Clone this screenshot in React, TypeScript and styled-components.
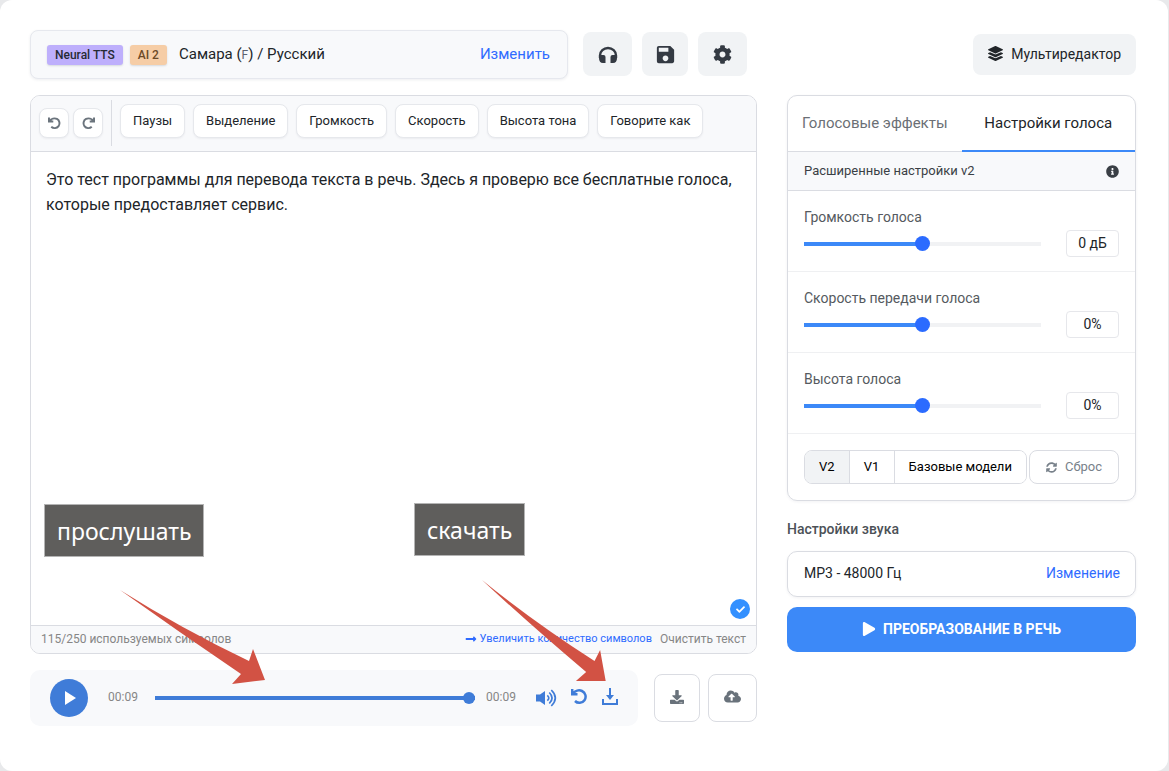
import React, { useState } from 'react';
import styled, { createGlobalStyle, css } from 'styled-components';
import { MdSave } from 'react-icons/md';
import { FaCog, FaLayerGroup, FaInfoCircle, FaPlay, FaSyncAlt, FaCloudUploadAlt, FaDownload, FaCheck, FaLongArrowAltRight } from 'react-icons/fa';

const blue = '#3c89f8';
const playerBlue = '#3f7cd8';
const line = '#dadce2';
const pale = '#f8f9fb';

const GlobalStyle = createGlobalStyle`
  *, *::before, *::after { box-sizing: border-box; }
  body {
    margin: 0;
    background: #e8e9eb;
    color: #212529;
    font: 14px/20px Roboto, "Liberation Sans", sans-serif;
  }
  button, input, textarea { font: inherit; color: inherit; margin: 0; }
  button { cursor: pointer; padding: 0; border: 0; background: none; }
  a { color: #2f6bff; text-decoration: none; }
  svg { display: block; flex: none; }
`;

const Page = styled.main`
  position: relative;
  min-height: 100vh;
  margin-right: 1px;
  padding: 30px 32px 44px 30px;
  background: #fff;
  border-radius: 12px;
`;

const Header = styled.header`
  display: flex;
  align-items: center;
  margin-bottom: 16px;
`;

const VoiceBar = styled.div`
  flex: 0 1 538px;
  display: flex;
  align-items: center;
  height: 49px;
  padding: 0 17px 0 16px;
  font-size: 15px;
  background: ${pale};
  border: 1px solid #e6e8ee;
  border-radius: 8px;
  box-shadow: 0 1px 3px rgba(30, 40, 60, 0.08);
  a { margin-left: auto; padding-bottom: 2px; }
  small { font-size: 12px; color: #5c6370; }
`;

const Tag = styled.span<{ $bg: string; $fg: string }>`
  padding: 0 8px;
  margin-right: 7px;
  font-size: 12px;
  font-weight: 500;
  border-radius: 3px;
  color: ${p => p.$fg};
  background: ${p => p.$bg};
  box-shadow: 0 1px 2px rgba(30, 40, 60, 0.15);
`;

const VoiceName = styled.span`
  margin-left: 5px;
`;

const HeaderTools = styled.div`
  display: flex;
  gap: 10px;
  margin-left: 15px;
  padding-bottom: 1px;
`;

const HeaderButton = styled.button<{ $narrow?: boolean }>`
  display: flex;
  align-items: center;
  justify-content: center;
  width: ${p => (p.$narrow ? 46 : 49)}px;
  height: 44px;
  border-radius: 8px;
  background: #f1f3f5;
  color: #343a43;
`;

const MultiButton = styled.button`
  display: flex;
  align-items: center;
  gap: 8px;
  height: 41px;
  margin-left: auto;
  padding: 0 15px 2px;
  border-radius: 8px;
  background: #f1f3f5;
`;

const Columns = styled.div`
  display: grid;
  grid-template-columns: minmax(0, 727fr) minmax(0, 349fr);
  column-gap: 30px;
`;

const Editor = styled.section`
  position: relative;
  display: flex;
  flex-direction: column;
  height: 559px;
  border: 1px solid ${line};
  border-radius: 10px;
`;

const Toolbar = styled.div`
  display: flex;
  gap: 8px;
  height: 56px;
  padding: 4px 8px;
  background: ${pale};
  border-bottom: 1px solid ${line};
  border-radius: 9px 9px 0 0;
`;

const History = styled.div`
  display: flex;
  align-items: center;
  gap: 4px;
  height: 46px;
  padding-right: 8px;
  border-right: 1px solid ${line};
`;

const softButton = css`
  display: flex;
  align-items: center;
  justify-content: center;
  background: #fff;
  border: 1px solid #e6e8ec;
  border-radius: 8px;
  box-shadow: 0 1px 2px rgba(30, 40, 60, 0.06);
`;

const HistoryButton = styled.button`
  ${softButton}
  width: 30px;
  height: 30px;
  color: #6b747d;
`;

const EffectButton = styled.button`
  ${softButton}
  height: 34px;
  margin-top: 4px;
  padding: 0 12px;
  font-size: 13px;
  white-space: nowrap;
`;

const TextArea = styled.textarea`
  flex: 1;
  width: 100%;
  padding: 15px;
  border: 0;
  outline: 0;
  resize: none;
  background: transparent;
  font-size: 16px;
  line-height: 25px;
`;

const StatusBar = styled.footer`
  display: flex;
  align-items: center;
  gap: 8px;
  height: 28px;
  padding: 0 10px 2px;
  font-size: 12px;
  color: #868686;
  background: ${pale};
  border-top: 1px solid ${line};
  border-radius: 0 0 9px 9px;
`;

const MoreLink = styled.a`
  display: flex;
  align-items: center;
  gap: 2px;
  margin-left: auto;
  font-size: 11px;
`;

const Badge = styled.span`
  position: absolute;
  right: 6px;
  bottom: 34px;
  display: grid;
  place-items: center;
  width: 20px;
  height: 20px;
  border-radius: 50%;
  background: #3390ff;
  color: #fff;
`;

const PlayerRow = styled.div`
  display: flex;
  align-items: center;
  margin-top: 16px;
`;

const Player = styled.div`
  flex: 1;
  display: flex;
  align-items: center;
  height: 56px;
  margin-right: 16px;
  padding: 0 20px;
  background: ${pale};
  border-radius: 10px;
`;

const Time = styled.span`
  padding-bottom: 2px;
  font-size: 12px;
  color: #868686;
`;

const PlayButton = styled.button`
  display: grid;
  place-items: center;
  width: 38px;
  height: 38px;
  margin-right: 20px;
  padding-left: 2px;
  border-radius: 50%;
  background: ${playerBlue};
  color: #fff;
`;

const PlayerTools = styled.div`
  display: flex;
  gap: 14px;
  margin-left: 20px;
  button { color: ${playerBlue}; }
`;

const FileButton = styled.button`
  display: grid;
  place-items: center;
  width: 46px;
  height: 48px;
  padding-bottom: 3px;
  border: 1px solid ${line};
  border-radius: 8px;
  background: #fff;
  color: #69727b;
  & + & { width: 49px; margin-left: 8px; }
`;

const Range = styled.input<{ $rest: string; $fill: string; $thumb: string; $size: number }>`
  appearance: none;
  flex: 1;
  min-width: 0;
  height: 16px;
  background: linear-gradient(${p => p.$fill}, ${p => p.$fill}) left center / var(--filled) 4px no-repeat,
    linear-gradient(${p => p.$rest}, ${p => p.$rest}) center / 100% 4px no-repeat;
  &::-webkit-slider-thumb {
    appearance: none;
    width: ${p => p.$size}px;
    height: ${p => p.$size}px;
    border-radius: 50%;
    background: ${p => p.$thumb};
  }
`;

const TrackRange = styled(Range)`
  margin: 0 11px 0 17px;
`;

const Panel = styled.section`
  border: 1px solid ${line};
  border-radius: 10px;
  box-shadow: 0 1px 3px rgba(30, 40, 60, 0.06);
`;

const Tabs = styled.div`
  display: flex;
  height: 56px;
  border-bottom: 1px solid ${line};
`;

const Tab = styled.button<{ $active?: boolean }>`
  flex: 1 1 50%;
  height: 56px;
  font-size: 15px;
  white-space: nowrap;
  color: ${p => (p.$active ? '#212529' : '#6b6f75')};
  border-bottom: 2px solid ${p => (p.$active ? blue : 'transparent')};
`;

const Notice = styled.div`
  display: flex;
  align-items: center;
  justify-content: space-between;
  height: 39px;
  padding: 0 16px;
  font-size: 13px;
  color: #3a3f45;
  background: ${pale};
  border-bottom: 1px solid ${line};
`;

const Setting = styled.div`
  height: 81px;
  padding: 16px 16px 0;
  border-bottom: 1px solid #eff0f2;
  label { display: block; color: #555a60; }
`;

const SettingRow = styled.div`
  display: flex;
  align-items: center;
  gap: 25px;
  margin-top: 3px;
`;

const Value = styled.output`
  width: 53px;
  height: 27px;
  line-height: 24px;
  text-align: center;
  border: 1px solid #e6e7eb;
  border-radius: 4px;
`;

const Versions = styled.div`
  display: flex;
  gap: 2px;
  padding: 16px;
  font-size: 13px;
`;

const Segments = styled.div`
  flex: 1;
  display: flex;
  height: 34px;
  border: 1px solid ${line};
  border-radius: 8px;
  overflow: hidden;
`;

const Segment = styled.button<{ $active?: boolean }>`
  flex: 1 1 auto;
  white-space: nowrap;
  color: #000;
  background: ${p => (p.$active ? '#f1f3f5' : '#fff')};
  & + & { border-left: 1px solid ${line}; }
`;

const ResetButton = styled.button`
  display: flex;
  align-items: center;
  justify-content: center;
  gap: 8px;
  width: 90px;
  height: 34px;
  color: #78818a;
  border: 1px solid ${line};
  border-radius: 8px;
`;

const Subtitle = styled.h2`
  margin: 18px 0 12px;
  font-size: 14px;
  line-height: 20px;
  font-weight: 500;
  color: #4c5157;
`;

const Format = styled(Panel)`
  display: flex;
  align-items: center;
  justify-content: space-between;
  height: 46px;
  padding: 0 15px 2px 16px;
`;

const ConvertButton = styled.button`
  display: flex;
  align-items: center;
  justify-content: center;
  gap: 7px;
  width: 100%;
  height: 45px;
  margin-top: 10px;
  padding-bottom: 2px;
  font-weight: 700;
  color: #fff;
  background: ${blue};
  border-radius: 10px;
`;

const Callout = styled.div<{ $left: number; $top: number }>`
  position: absolute;
  left: ${p => p.$left}px;
  top: ${p => p.$top}px;
  padding: 10px 12px 9px;
  font: 23px/32px "Noto Sans", sans-serif;
  color: #fff;
  background: #5f5e5c;
  border: 1px solid #b4b4b4;
`;

const Pointer = styled.svg<{ $left: number; $top: number }>`
  position: absolute;
  left: ${p => p.$left}px;
  top: ${p => p.$top}px;
  pointer-events: none;
`;

const effects = ['Паузы', 'Выделение', 'Громкость', 'Скорость', 'Высота тона', 'Говорите как'];
const settings = [
  { id: 'volume', label: 'Громкость голоса', unit: ' дБ' },
  { id: 'rate', label: 'Скорость передачи голоса', unit: '%' },
  { id: 'pitch', label: 'Высота голоса', unit: '%' },
];

function HeadphonesIcon() {
  return (
    <svg width="20" height="17" viewBox="0 0 20 17" fill="currentColor">
      <path d="M2 12v-2.500a8 7.500 0 0 1 16 0V12" fill="none" stroke="currentColor" strokeWidth="2.400" />
      <path d="M1 9h4.500Q7.500 9 7.500 11v6H5Q1 17 1 12zM19 9h-4.500q-2 0-2 2v6H15q4 0 4-5z" />
    </svg>
  );
}

function TurnIcon({ size, weight, forward }: { size: number; weight: number; forward?: boolean }) {
  return (
    <svg width={size} height={size} viewBox="0 0 16 16" fill="none" stroke="currentColor" strokeWidth={weight}>
      <g transform={forward ? 'matrix(-1 0 0 1 16 0)' : undefined}>
        <path d="M1.200 0.500v5h5.300M2 5.200C4 2 8 1 11 2.400a6 6 0 1 1-7 9.600" />
      </g>
    </svg>
  );
}

function VoiceSetting({ id, label, unit }: { id: string; label: string; unit: string }) {
  const [value, setValue] = useState(0);
  return (
    <Setting>
      <label htmlFor={id}>{label}</label>
      <SettingRow>
        <Range
          id={id}
          type="range"
          min={-50}
          max={50}
          value={value}
          onChange={e => setValue(Number(e.target.value))}
          $fill={blue}
          $rest="#f1f2f4"
          $thumb="#2b6bff"
          $size={15}
          style={{ '--filled': `${value + 50}%` } as React.CSSProperties}
        />
        <Value htmlFor={id}>{value}{unit}</Value>
      </SettingRow>
    </Setting>
  );
}

export default function App() {
  const [text, setText] = useState(
    'Это тест программы для перевода текста в речь. Здесь я проверю все бесплатные голоса, которые предоставляет сервис.',
  );
  const [position, setPosition] = useState(100);
  return (
    <>
      <GlobalStyle />
      <Page>
        <Header>
          <VoiceBar>
            <Tag $bg="#beaffc" $fg="#262a33">Neural TTS</Tag>
            <Tag $bg="#f6cda6" $fg="#6d4a27">AI 2</Tag>
            <VoiceName>Самара (<small>F</small>) / Русский</VoiceName>
            <a href="#voice">Изменить</a>
          </VoiceBar>
          <HeaderTools>
            <HeaderButton aria-label="Прослушать"><HeadphonesIcon /></HeaderButton>
            <HeaderButton aria-label="Сохранить" $narrow><MdSave size={23} /></HeaderButton>
            <HeaderButton aria-label="Настройки"><FaCog size={19} /></HeaderButton>
          </HeaderTools>
          <MultiButton><FaLayerGroup size={15} />Мультиредактор</MultiButton>
        </Header>
        <Columns>
          <div>
            <Editor>
              <Toolbar>
                <History>
                  <HistoryButton aria-label="Отменить"><TurnIcon size={13} weight={2.4} /></HistoryButton>
                  <HistoryButton aria-label="Повторить"><TurnIcon size={13} weight={2.4} forward /></HistoryButton>
                </History>
                {effects.map(name => <EffectButton key={name}>{name}</EffectButton>)}
              </Toolbar>
              <TextArea aria-label="Текст" spellCheck={false} value={text} onChange={e => setText(e.target.value)} />
              <StatusBar>
                <span>115/250 используемых символов</span>
                <MoreLink href="#limit"><FaLongArrowAltRight size={12} />Увеличить количество символов</MoreLink>
                <button>Очистить текст</button>
              </StatusBar>
              <Badge><FaCheck size={9} /></Badge>
            </Editor>
            <PlayerRow>
              <Player>
                <PlayButton aria-label="Воспроизвести">
                  <svg width="14" height="16" viewBox="0 0 14 16"><path d="M2 1l11 7-11 7z" fill="currentColor" /></svg>
                </PlayButton>
                <Time>00:09</Time>
                <TrackRange
                  type="range"
                  aria-label="Позиция"
                  value={position}
                  onChange={e => setPosition(Number(e.target.value))}
                  $fill={playerBlue}
                  $rest="#dfe3e8"
                  $thumb={playerBlue}
                  $size={12}
                  style={{ '--filled': `${position}%` } as React.CSSProperties}
                />
                <Time>00:09</Time>
                <PlayerTools>
                  <button aria-label="Громкость">
                    <svg width="21" height="18" viewBox="0 0 21 18" fill="none" stroke="currentColor" strokeWidth="1.700">
                      <path d="M0 5.500h4L9 2v14l-5-3.500H0z" fill="currentColor" stroke="none" />
                      <path d="M11.300 6.300q3 2.700 0 5.400M13.300 3.500q5.500 5.500 0 11M15.300 1q8 8 0 16" />
                    </svg>
                  </button>
                  <button aria-label="Повторить">
                    <svg width="17" height="20" viewBox="0 0 17 20" fill="none" stroke="currentColor" strokeWidth="2.500">
                      <path d="M1.200 1v5.200h5.300M2 5.500C4 2.500 8 1.600 11 3a6.200 6.200 0 1 1-7 10" />
                    </svg>
                  </button>
                  <button aria-label="Скачать">
                    <svg width="16" height="20" viewBox="0 0 16 20" fill="none" stroke="currentColor" strokeWidth="2">
                      <path d="M1 11v5h14v-5M8 0v8" /><path d="M4 7h8l-4 5z" fill="currentColor" stroke="none" />
                    </svg>
                  </button>
                </PlayerTools>
              </Player>
              <FileButton aria-label="Скачать файл"><FaDownload size={14} /></FileButton>
              <FileButton aria-label="Загрузить в облако"><FaCloudUploadAlt size={17} /></FileButton>
            </PlayerRow>
          </div>
          <aside>
            <Panel>
              <Tabs role="tablist">
                <Tab role="tab" aria-selected={false}>Голосовые эффекты</Tab>
                <Tab role="tab" aria-selected $active>Настройки голоса</Tab>
              </Tabs>
              <Notice>Расширенные настройки v2<FaInfoCircle size={13} /></Notice>
              {settings.map(s => <VoiceSetting key={s.id} {...s} />)}
              <Versions>
                <Segments>
                  <Segment $active>V2</Segment>
                  <Segment>V1</Segment>
                  <Segment>Базовые модели</Segment>
                </Segments>
                <ResetButton><FaSyncAlt size={11} />Сброс</ResetButton>
              </Versions>
            </Panel>
            <Subtitle>Настройки звука</Subtitle>
            <Format>MP3 - 48000 Гц<a href="#format">Изменение</a></Format>
            <ConvertButton><FaPlay size={14} />ПРЕОБРАЗОВАНИЕ В РЕЧЬ</ConvertButton>
          </aside>
        </Columns>
        <Callout $left={44} $top={504}>прослушать</Callout>
        <Callout $left={414} $top={503}>скачать</Callout>
        <Pointer $left={120} $top={590} width="145" height="94" fill="#d25244">
          <path d="M0 0Q62 39 129 71L133 59 145 90 112 94 121 84Q59 42 0 0z" />
        </Pointer>
        <Pointer $left={482} $top={580} width="124" height="102" fill="#d25244">
          <path d="M0 0Q57 43 121 81L127 70 133 101 101 101 112 92Q52 45 0 0z" transform="scale(.93 1)" />
        </Pointer>
      </Page>
    </>
  );
}
